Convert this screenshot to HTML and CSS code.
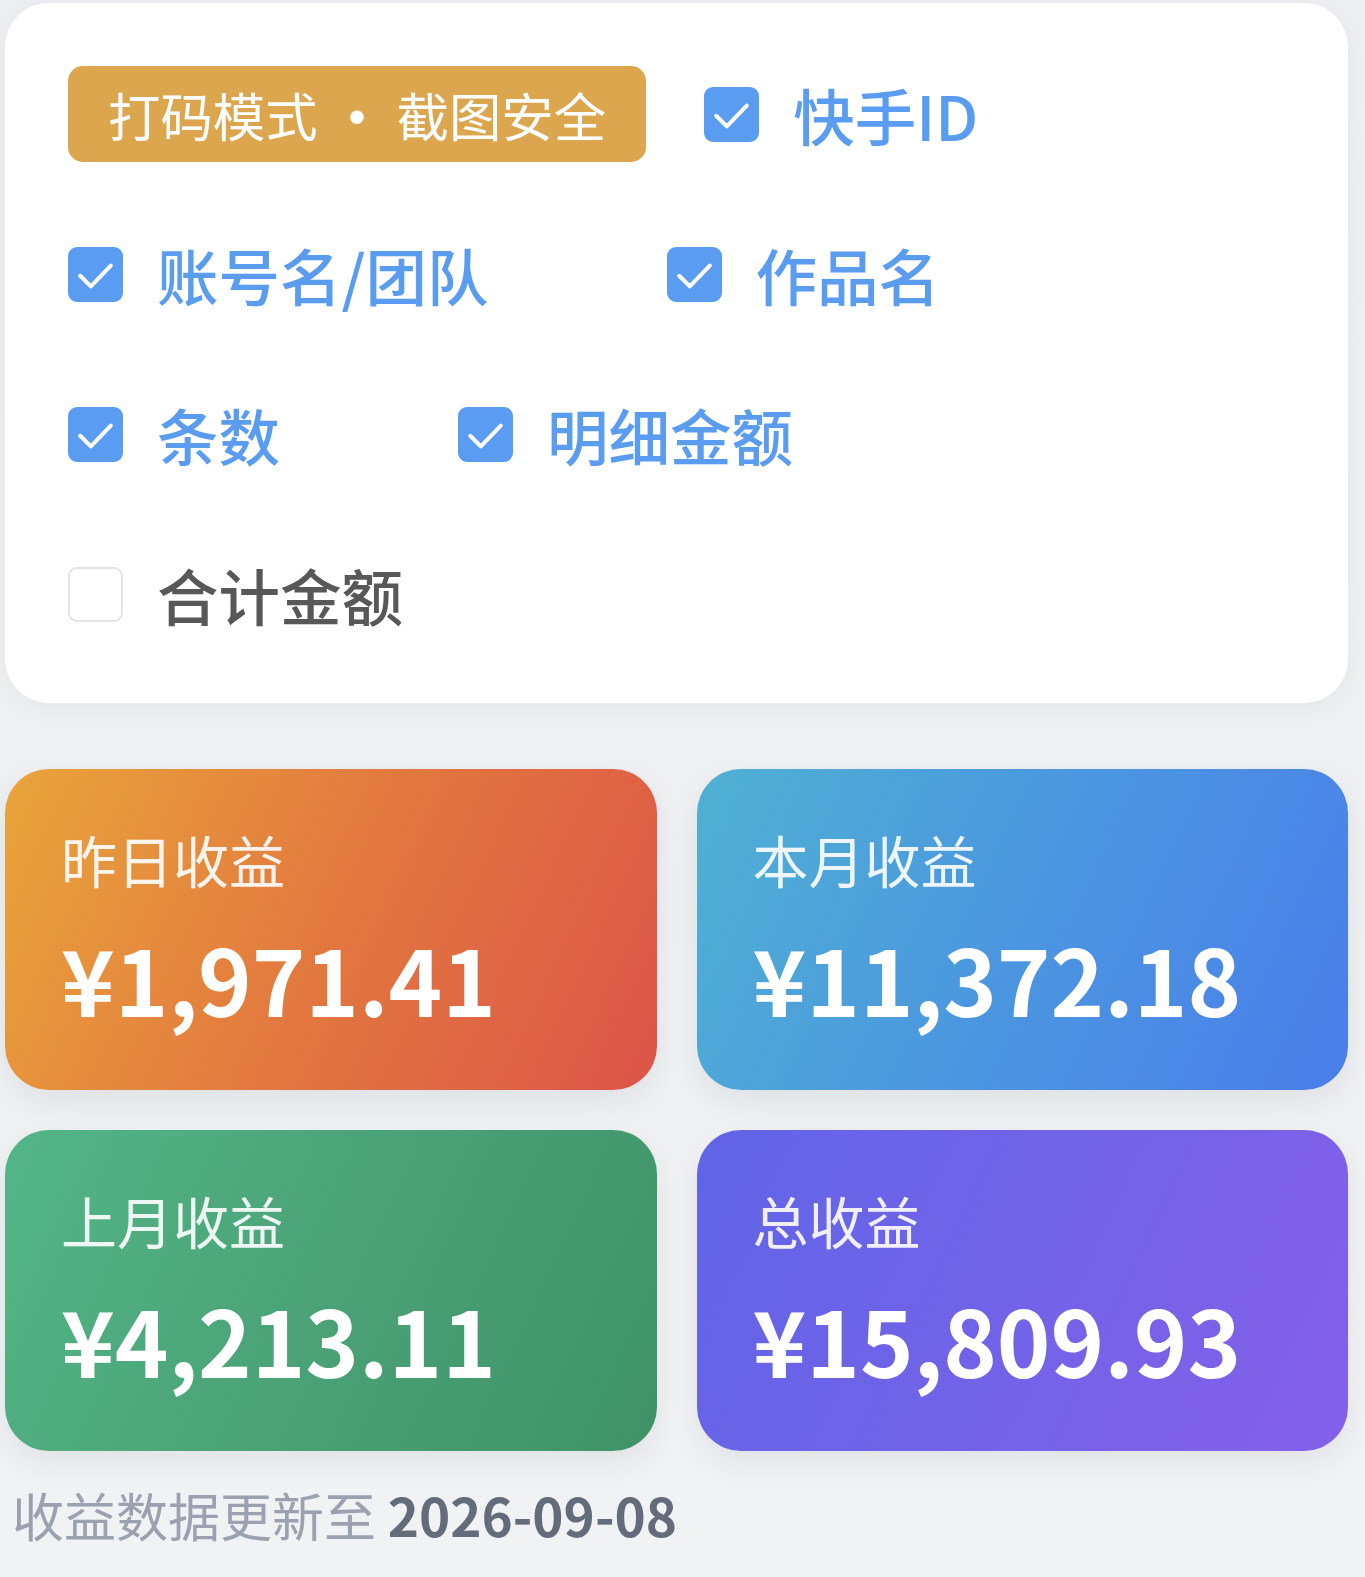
FILE: index.html
```html
<!DOCTYPE html>
<html lang="zh-CN">
<head>
<meta charset="utf-8">
<title>收益</title>
<link rel="stylesheet" href="styles.css">
</head>
<body>
<div class="page">
  <section class="panel">
    <div class="opts">
      <div class="badge">打码模式<span class="dot">·</span>截图安全</div>
      <label class="opt">
        <span class="box on"><svg viewBox="0 0 24 24"><path d="M4.8 12.6 L9.8 17.6 L19.2 7.8"/></svg></span>
        <span class="txt">快手ID</span>
      </label>
      <label class="opt">
        <span class="box on"><svg viewBox="0 0 24 24"><path d="M4.8 12.6 L9.8 17.6 L19.2 7.8"/></svg></span>
        <span class="txt">账号名/团队</span>
      </label>
      <label class="opt">
        <span class="box on"><svg viewBox="0 0 24 24"><path d="M4.8 12.6 L9.8 17.6 L19.2 7.8"/></svg></span>
        <span class="txt">作品名</span>
      </label>
      <label class="opt">
        <span class="box on"><svg viewBox="0 0 24 24"><path d="M4.8 12.6 L9.8 17.6 L19.2 7.8"/></svg></span>
        <span class="txt">条数</span>
      </label>
      <label class="opt">
        <span class="box on"><svg viewBox="0 0 24 24"><path d="M4.8 12.6 L9.8 17.6 L19.2 7.8"/></svg></span>
        <span class="txt">明细金额</span>
      </label>
      <label class="opt off">
        <span class="box"></span>
        <span class="txt">合计金额</span>
      </label>
    </div>
  </section>

  <section class="stats">
    <div class="stat orange">
      <div class="stat-label">昨日收益</div>
      <div class="stat-value">¥1,971.41</div>
    </div>
    <div class="stat blue">
      <div class="stat-label">本月收益</div>
      <div class="stat-value">¥11,372.18</div>
    </div>
    <div class="stat green">
      <div class="stat-label">上月收益</div>
      <div class="stat-value">¥4,213.11</div>
    </div>
    <div class="stat purple">
      <div class="stat-label">总收益</div>
      <div class="stat-value">¥15,809.93</div>
    </div>
  </section>

  <p class="foot">收益数据更新至 <b class="date">2026-09-08</b></p>
</div>
</body>
</html>
```
FILE: styles.css
```css
* { box-sizing: border-box; }

body {
  margin: 0;
  background: linear-gradient(180deg, #eceef1 0%, #eef0f2 60%, #f1f2f4 100%);
  font-family: "Noto Sans CJK SC", "Noto Sans", sans-serif;
  min-height: 1577px;
}

.page {
  margin-left: 5px;
  width: 1343px;
  padding-top: 3px;
}

.panel {
  background: #ffffff;
  border-radius: 44px;
  padding: 63px 63px 61px;
  box-shadow: 0 6px 24px rgba(30, 40, 60, 0.04);
}

.opts {
  display: flex;
  flex-wrap: wrap;
  align-items: center;
  column-gap: 58px;
  row-gap: 64px;
}

.badge {
  height: 96px;
  padding: 0 40px;
  display: flex;
  align-items: center;
  background: #dca64f;
  color: #ffffff;
  border-radius: 15px;
  font-size: 52.4px;
  font-weight: 400;
  line-height: 1;
}

.dot {
  display: inline-block;
  width: 79px;
  text-align: center;
  font-weight: 700;
}

.opt {
  height: 96px;
  display: flex;
  align-items: center;
  gap: 34px;
  padding-right: 120px;
}

.box {
  width: 55px;
  height: 55px;
  border-radius: 9px;
  flex: none;
  display: flex;
  align-items: center;
  justify-content: center;
  background: #ffffff;
  border: 2px solid #e2e4e8;
}

.box.on {
  background: #5a9cf2;
  border-color: #5a9cf2;
}

.box svg {
  width: 55px;
  height: 55px;
  fill: none;
  stroke: #ffffff;
  stroke-width: 1.9;
  stroke-linecap: round;
  stroke-linejoin: round;
}

.txt {
  font-size: 61.5px;
  font-weight: 500;
  color: #5a9cf0;
  white-space: nowrap;
}

.opt.off .txt {
  color: #585858;
}

.stats {
  margin-top: 66px;
  display: grid;
  grid-template-columns: 1fr 1fr;
  column-gap: 40px;
  row-gap: 40px;
}

.stat {
  height: 321px;
  border-radius: 44px;
  padding: 62px 0 0 56px;
  color: #ffffff;
  box-shadow: 0 12px 30px rgba(30, 40, 60, 0.07);
}

.orange { background: linear-gradient(115deg, #e9a53a 0%, #e2783f 50%, #dc5448 100%); }
.blue   { background: linear-gradient(115deg, #4fb1d2 0%, #4b96e0 50%, #4a7eea 100%); }
.green  { background: linear-gradient(115deg, #53b688 0%, #4aa276 50%, #3f9268 100%); }
.purple { background: linear-gradient(115deg, #6164e7 0%, #7263e8 50%, #8460e9 100%); }

.stat-label {
  font-size: 56px;
  line-height: 1;
  font-weight: 400;
  color: rgba(255, 255, 255, 0.9);
}

.stat-value {
  margin-top: 45px;
  font-size: 91px;
  line-height: 1;
  font-weight: 700;
  white-space: nowrap;
}

.foot {
  margin: 37px 0 0 7px;
  font-size: 52px;
  line-height: 1;
  color: #9ba1ae;
  white-space: nowrap;
}

.date {
  font-size: 53px;
  font-weight: 700;
  color: #646c7b;
}
```
